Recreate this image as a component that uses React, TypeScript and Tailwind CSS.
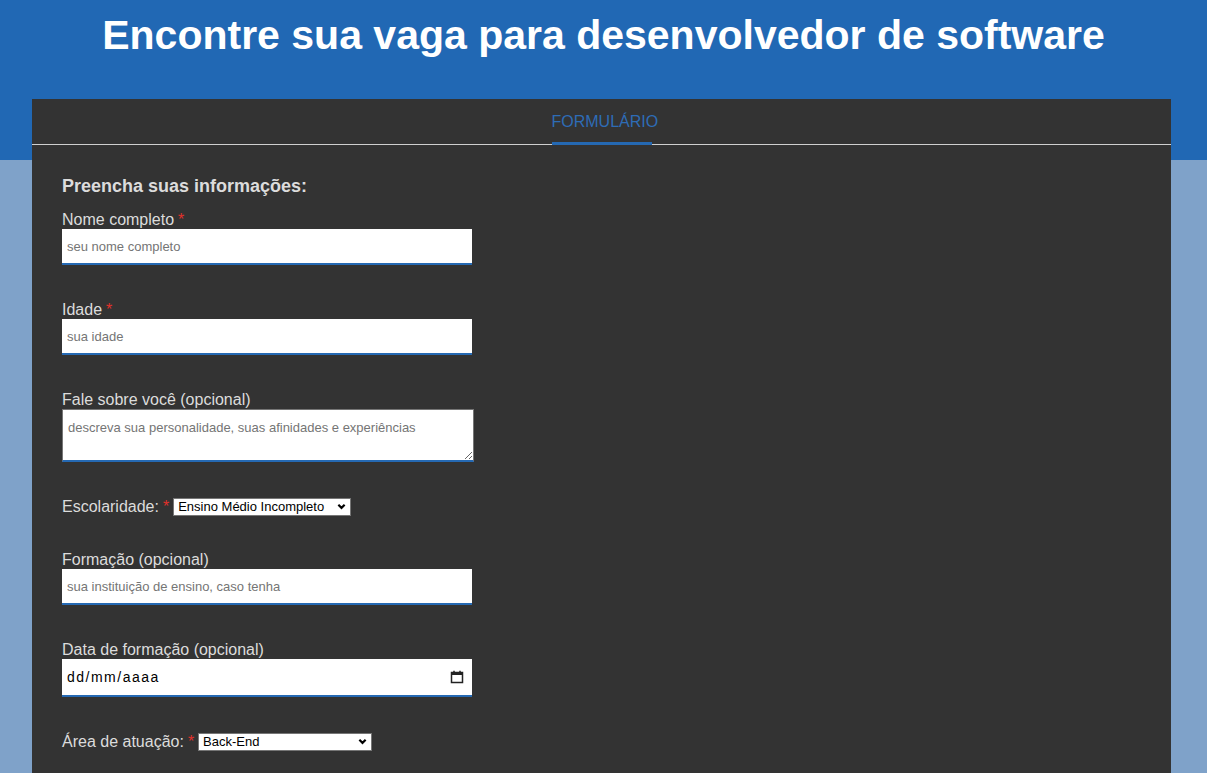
import { useState } from "react";

function Chevron() {
  return (
    <svg className="w-[9px] h-[9px]" viewBox="0 0 10 10" fill="none" stroke="#000" strokeWidth={2.4}>
      <path d="M1.5 3 5 6.5 8.5 3" />
    </svg>
  );
}

function Req() {
  return <span className="text-[#e0302a] ml-1">*</span>;
}

function Field({ label, required, placeholder }: { label: string; required?: boolean; placeholder: string }) {
  return (
    <div className="mb-[35px]">
      <label className="block text-[16px] leading-[19px] text-[#dcdcdc]">
        {label}
        {required && <Req />}
      </label>
      <input
        type="text"
        placeholder={placeholder}
        className="block w-[410px] h-[36px] bg-white border-b-2 border-[#2569b3] px-[5px] text-[13px] text-black placeholder:text-[#757575] outline-none"
      />
    </div>
  );
}

export default function App() {
  const [esc, setEsc] = useState("Ensino Médio Incompleto");
  const [area, setArea] = useState("Back-End");

  return (
    <div className="min-h-[773px] bg-[#7fa2c9] font-['Liberation_Sans',Arial,sans-serif]">
      <header className="bg-[#2168b4] h-[160px] pt-[12px]">
        <h1 className="text-center text-white font-bold text-[41px] leading-[46px]">
          Encontre sua vaga para desenvolvedor de software
        </h1>
      </header>

      <main className="ml-[32px] mr-[36px] -mt-[61px] bg-[#333333] min-h-[674px]">
        {/* Tabs */}
        <div className="h-[46px] border-b border-[#d0d0d0] flex justify-center">
          <button className="w-[100px] h-[46px] -mb-px border-b-[3px] border-[#2569b3] text-[16px] text-[#2e6cb6] pt-[3px]">
            FORMULÁRIO
          </button>
        </div>

        <form className="px-[30px] pt-[31px]">
          <h3 className="text-[18px] leading-[20px] font-bold text-[#dcdcdc] mb-[14px]">
            Preencha suas informações:
          </h3>

          <Field label="Nome completo" required placeholder="seu nome completo" />
          <Field label="Idade" required placeholder="sua idade" />

          <div className="mb-[35px]">
            <label className="block text-[16px] leading-[19px] text-[#dcdcdc]">Fale sobre você (opcional)</label>
            <textarea
              placeholder="descreva sua personalidade, suas afinidades e experiências"
              className="block w-[412px] h-[53px] bg-white border border-[#767676] border-b-2 border-b-[#2569b3] px-[5px] py-[10px] text-[13px] leading-[15px] text-black placeholder:text-[#757575] outline-none"
            />
          </div>

          <div className="mb-[34px] flex items-center h-[19px] text-[16px] text-[#dcdcdc]">
            <span>Escolaridade:</span>
            <Req />
            <div className="relative ml-[4px] w-[178px] h-[18px]">
              <select
                value={esc}
                onChange={(e) => setEsc(e.target.value)}
                className="appearance-none block w-full h-full bg-white border border-[#767676] text-[13px] leading-[16px] py-0 text-black pl-[4px] outline-none"
              >
                <option>Ensino Médio Incompleto</option>
                <option>Ensino Médio Completo</option>
                <option>Ensino Superior Incompleto</option>
                <option>Ensino Superior Completo</option>
              </select>
              <span className="absolute right-[5px] top-[4px] pointer-events-none">
                <Chevron />
              </span>
            </div>
          </div>

          <Field label="Formação (opcional)" placeholder="sua instituição de ensino, caso tenha" />

          <div className="mb-[35px]">
            <label className="block text-[16px] leading-[19px] text-[#dcdcdc]">Data de formação (opcional)</label>
            <div className="relative w-[410px] h-[38px] bg-white border-b-2 border-[#2569b3] flex items-center">
              <input
                type="text"
                placeholder="dd/mm/aaaa"
                className="w-full h-full px-[5px] text-[14px] tracking-[1.5px] text-black placeholder:text-black outline-none"
              />
              <svg className="absolute right-[8px] top-[11px] w-[14px] h-[14px]" viewBox="0 0 14 14" fill="none">
                <rect x="1.5" y="2.5" width="11" height="10" stroke="#222" strokeWidth="1.5" />
                <rect x="1.5" y="2.5" width="11" height="2.5" fill="#222" />
                <path d="M4 0.8v2.2M10 0.8v2.2" stroke="#222" strokeWidth="1.5" />
              </svg>
            </div>
          </div>

          <div className="mb-[35px] flex items-center h-[19px] text-[16px] text-[#dcdcdc]">
            <span>Área de atuação:</span>
            <Req />
            <div className="relative ml-[4px] w-[174px] h-[18px]">
              <select
                value={area}
                onChange={(e) => setArea(e.target.value)}
                className="appearance-none block w-full h-full bg-white border border-[#767676] text-[13px] leading-[16px] py-0 text-black pl-[4px] outline-none"
              >
                <option>Back-End</option>
                <option>Front-End</option>
                <option>Full-Stack</option>
                <option>Mobile</option>
              </select>
              <span className="absolute right-[5px] top-[4px] pointer-events-none">
                <Chevron />
              </span>
            </div>
          </div>
        </form>
      </main>
    </div>
  );
}
